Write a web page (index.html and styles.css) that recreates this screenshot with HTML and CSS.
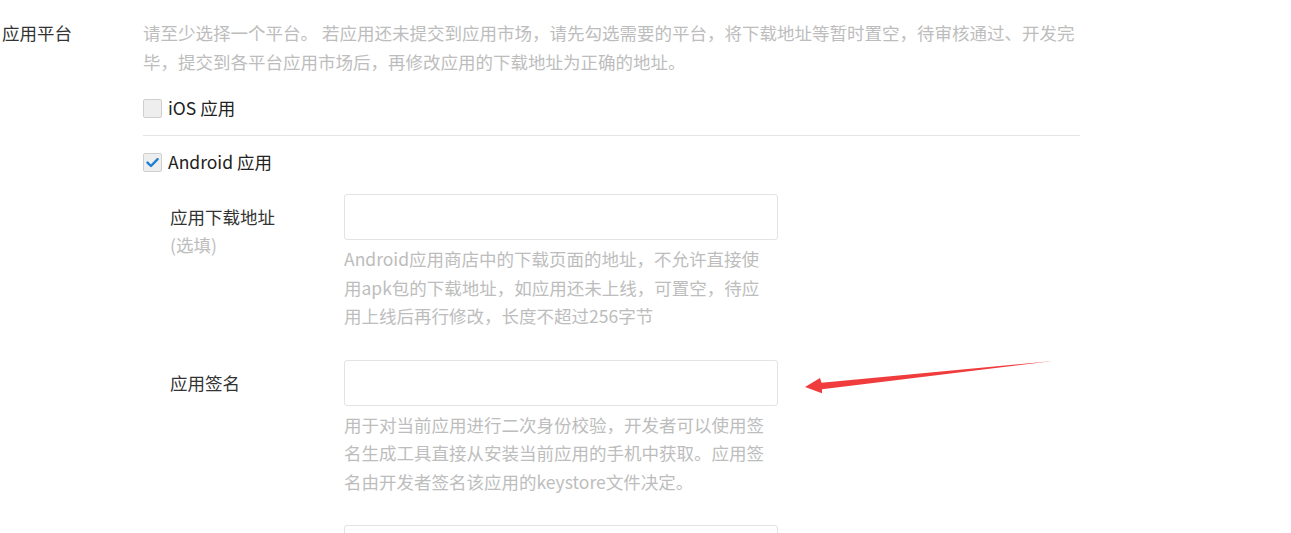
FILE: index.html
```html
<!DOCTYPE html>
<html lang="zh-CN">
<head>
<meta charset="utf-8">
<title>应用平台</title>
<link rel="stylesheet" href="styles.css">
</head>
<body>
<div class="page">
  <div class="form-row">
    <div class="row-label">应用平台</div>
    <div class="row-content">
      <p class="help help-top">请至少选择一个平台。 若应用还未提交到应用市场，请先勾选需要的平台，将下载地址等暂时置空，待审核通过、开发完毕，提交到各平台应用市场后，再修改应用的下载地址为正确的地址。</p>
      <label class="option">
        <span class="checkbox"></span>
        <span class="option-text">iOS 应用</span>
      </label>
      <div class="separator"></div>
      <label class="option">
        <span class="checkbox checked">
          <svg viewBox="0 0 19 19" width="19" height="19"><path d="M4.5 9.6 L8 13 L14.6 6.2" fill="none" stroke="#1f7fd1" stroke-width="2.4" stroke-linecap="round" stroke-linejoin="round"/></svg>
        </span>
        <span class="option-text">Android 应用</span>
      </label>
      <div class="subform">
        <div class="field">
          <div class="field-label">
            <div class="field-name">应用下载地址</div>
            <div class="field-optional">(选填)</div>
          </div>
          <div class="field-body">
            <div class="input"></div>
            <p class="help help-field">Android应用商店中的下载页面的地址，不允许直接使用apk包的下载地址，如应用还未上线，可置空，待应用上线后再行修改，长度不超过256字节</p>
          </div>
        </div>
        <div class="field">
          <div class="field-label">
            <div class="field-name">应用签名</div>
          </div>
          <div class="field-body">
            <div class="input"></div>
            <p class="help help-field">用于对当前应用进行二次身份校验，开发者可以使用签名生成工具直接从安装当前应用的手机中获取。应用签名由开发者签名该应用的keystore文件决定。</p>
          </div>
        </div>
        <div class="field">
          <div class="field-label"></div>
          <div class="field-body">
            <div class="input"></div>
          </div>
        </div>
      </div>
    </div>
  </div>
  <svg class="annotation" width="1291" height="533" viewBox="0 0 1291 533">
    <polygon points="805,387 820,378 821.5,382.8 1053,361 822,389.3 822,393.3" fill="#f03c3c"/>
  </svg>
</div>
</body>
</html>
```
FILE: styles.css
```css
html, body {
  margin: 0;
  padding: 0;
  background: #fff;
}
body {
  font-family: "Microsoft YaHei", "Noto Sans CJK SC", "Noto Sans", sans-serif;
  font-size: 17.5px;
  color: #333;
  height: 533px;
  overflow: hidden;
}
.page {
  position: relative;
  padding-top: 18px;
}
.form-row {
  display: flex;
  padding-left: 2px;
}
.row-label {
  width: 141px;
  flex: none;
  line-height: 29px;
  color: #333;
}
.row-content {
  width: 937px;
  flex: none;
}
.help {
  margin: 0;
  color: #bdbdbd;
}
.help-top {
  line-height: 29px;
  margin-bottom: 14px;
}
.option {
  display: flex;
  align-items: center;
  height: 36px;
  gap: 6px;
}
.checkbox {
  width: 17px;
  height: 17px;
  border: 1px solid #cfcfcf;
  border-radius: 2px;
  background: #eeeeee;
  position: relative;
  flex: none;
}
.checkbox svg {
  position: absolute;
  left: -1px;
  top: -1px;
}
.option-text {
  color: #222;
  line-height: 36px;
}
.separator {
  height: 1px;
  background: #e6e6e6;
  margin: 9px 0 8px;
}
.subform {
  margin-top: 14px;
  padding-left: 27px;
}
.field {
  display: flex;
  margin-bottom: 29px;
}
.field-label {
  width: 174px;
  flex: none;
}
.field-name {
  line-height: 46px;
  color: #333;
}
.field-optional {
  line-height: 10px;
  color: #bdbdbd;
}
.field-body {
  width: 434px;
}
.input {
  height: 44px;
  border: 1px solid #e3e3e3;
  border-radius: 3px;
  background: #fff;
}
.help-field {
  margin-top: 5px;
  line-height: 28.5px;
  max-width: 426px;
}
.annotation {
  position: absolute;
  left: 0;
  top: 0;
  pointer-events: none;
}
```
